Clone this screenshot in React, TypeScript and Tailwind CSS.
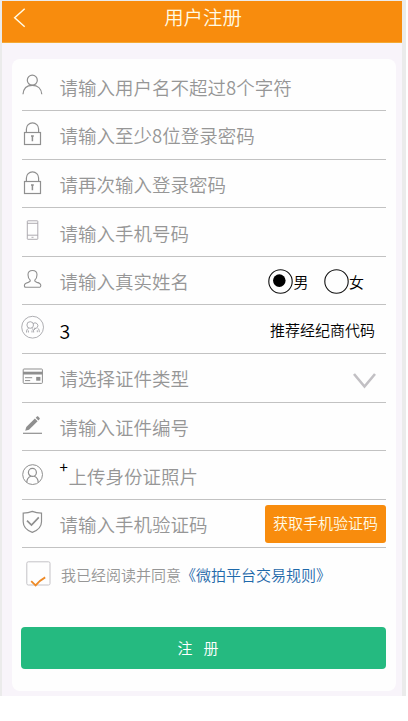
import type { ReactNode } from 'react';

interface FieldRowProps {
  icon: ReactNode;
  children: ReactNode;
}

// Icons are drawn in a box as tall as the row, 22px wide
function RowIcon({ children, color = '#8f8f8f' }: { children: ReactNode; color?: string }) {
  return (
    <svg
      width="22"
      height="48"
      viewBox="0 0 22 48"
      className="shrink-0 self-start overflow-visible"
      fill="none"
      stroke={color}
      strokeWidth="1.2"
    >
      {children}
    </svg>
  );
}

function FieldRow({ icon, children }: FieldRowProps) {
  return (
    <div className="flex h-[48.6px] items-center border-b border-[#c2c2c2]">
      {icon}
      <div className="flex h-full min-w-0 flex-1 items-center pt-[3px] pl-[15.5px]">{children}</div>
    </div>
  );
}

function Placeholder({ children }: { children: ReactNode }) {
  return <span className="text-[18.5px] font-[350] whitespace-nowrap text-[#969696]">{children}</span>;
}

const UserIcon = () => (
  <RowIcon>
    <circle cx="10.3" cy="18.2" r="5" />
    <path d="M1 32.2C1.4 26.5 5 23.3 10.3 23.3S19.4 26.5 19.8 32.2" />
  </RowIcon>
);

const LockIcon = () => (
  <RowIcon>
    <rect x="2.5" y="21.5" width="16" height="12" />
    <path d="M4.4 21.5V18a6.1 6.1 0 0 1 12.2 0v3.5" />
    <path d="M10.4 24.5v5.8M9 25h2.8" strokeWidth="1.5" />
  </RowIcon>
);

const PhoneIcon = () => (
  <RowIcon color="#a5a2a8">
    <rect x="5.3" y="12.8" width="10.5" height="18.5" rx="0.5" strokeWidth="0.9" />
    <path d="M5.3 15.3h10.5M5.3 27.2h10.5M9.5 29.3h2" strokeWidth="0.9" />
  </RowIcon>
);

const PersonIcon = () => (
  <RowIcon>
    <path
      d="M8.2 23.2C6.5 21.6 6 19.8 6 17.7c0-2.6 1.9-4.2 4.5-4.2s4.5 1.6 4.5 4.2c0 2.1-.5 3.9-2.2 5.5-.3 1.5.8 1.8 2.2 2.2 2.5.6 3.8 1.1 3.8 3.2 0 1.2-.3 1.6-1 1.6H3.6c-.8 0-1.2-.4-1.2-1.6 0-2.1 1.5-2.6 3.9-3.2 1.3-.4 2.3-.7 1.9-2.2Z"
      strokeWidth="1.1"
    />
  </RowIcon>
);

const GroupIcon = () => (
  <RowIcon color="#9b9ba0">
    <circle cx="10.6" cy="22.2" r="10.9" strokeWidth="0.8" />
    <g strokeWidth="0.85">
      <circle cx="8.2" cy="20" r="3.3" />
      <path d="M11.2 18.6a2.8 2.8 0 1 1 .7 4.6" />
      <path d="M4.5 27.5c0-2.2.7-3.6 2.2-4.3M9.7 23.2c1.4.7 2 2.2 2 4.3M12.2 25c.3-1 .8-1.5 1.5-1.8M15.6 23.1c1.2.7 1.7 2 1.7 4.1M6.4 25.5v2M10 25.5v2M15.3 25.3v1.9" />
    </g>
  </RowIcon>
);

const CardIcon = () => (
  <RowIcon>
    <rect x="1.2" y="15" width="19.2" height="14.4" rx="0.8" strokeWidth="1" />
    <path d="M1 19.1h19.6" strokeWidth="2.8" />
    <path d="M3 23.7h7.2M3 26.6h5.2" strokeWidth="1" />
    <rect x="14.2" y="22.9" width="4.2" height="3.8" fill="#8f8f8f" stroke="none" />
  </RowIcon>
);

const PencilIcon = () => (
  <RowIcon>
    <path d="M1 30.3h19" strokeWidth="1.2" />
    <path d="m3.2 27.8 1.1-3.9 8.6-8.3 2.7 2.7-8.6 8.4Z" fill="#8f8f8f" stroke="none" />
    <path d="m13.7 14.7 1.2-1.1c.5-.5 1-.4 1.5.1l1 1c.5.5.6 1 .1 1.5l-1.1 1.2Z" fill="#8f8f8f" stroke="none" />
  </RowIcon>
);

const AvatarIcon = () => (
  <RowIcon>
    <circle cx="10.6" cy="23.6" r="9.9" strokeWidth="1" />
    <circle cx="10.4" cy="21.4" r="4" strokeWidth="1.2" />
    <path d="M4.8 31.2c.1-2.9 1.5-4.9 4-5.9M12.2 25.3c2.5 1 3.9 3 4 5.9" strokeWidth="1.2" />
  </RowIcon>
);

const ShieldIcon = () => (
  <RowIcon>
    <path
      d="M10.3 11.4c2.6 1.1 5.6 1.7 9.2 1.7v8.6c0 5-4 8.7-9.2 10.7-5.2-2-9.1-5.7-9.1-10.7v-8.6c3.6 0 6.6-.6 9.1-1.7Z"
      strokeWidth="1.2"
    />
    <path d="m5 20.6 4.5 4.4 7.3-7.6" strokeWidth="1.7" />
  </RowIcon>
);

function Radio({ label, checked = false }: { label: string; checked?: boolean }) {
  return (
    <label className="flex items-center">
      <svg width="25" height="25" viewBox="0 0 25 25" fill="none">
        <circle cx="12.5" cy="12.5" r="11.7" stroke="#111" strokeWidth="1.1" />
        {checked && <circle cx="11.3" cy="11.6" r="6.3" fill="#000" />}
      </svg>
      <span className="text-[15px] leading-6 font-[350] text-black">{label}</span>
    </label>
  );
}

export default function App() {
  return (
    <div className="h-[721px] w-[408px] bg-white font-['Noto_Sans_CJK_SC',sans-serif]">
      <div className="h-[696px] w-[406px] bg-[#ebebeb] pt-px pr-1 pl-0.5">
        <div className="h-full bg-[#f8f4fa]">
          <header className="relative flex h-[41.5px] justify-center border-b border-[#f4aa35] bg-[#f88c0d]">
            <svg
              className="absolute top-[7px] left-[11px]"
              width="13"
              height="20"
              viewBox="0 0 13 20"
              fill="none"
              stroke="#fffbe6"
              strokeWidth="1.5"
            >
              <path d="M11.7 .8 1.7 9.8l10 9" />
            </svg>
            <h1 className="pl-0.5 text-[19.4px] leading-[32px] font-[350] text-[#fffbe6]">用户注册</h1>
          </header>

          <main className="mt-[16.5px] mr-[6px] ml-[10px] h-[632px] rounded-lg bg-[#fefefe] pt-[3.4px] pr-[10px] pl-[10px]">
            <FieldRow icon={<UserIcon />}>
              <Placeholder>请输入用户名不超过8个字符</Placeholder>
            </FieldRow>
            <FieldRow icon={<LockIcon />}>
              <Placeholder>请输入至少8位登录密码</Placeholder>
            </FieldRow>
            <FieldRow icon={<LockIcon />}>
              <Placeholder>请再次输入登录密码</Placeholder>
            </FieldRow>
            <FieldRow icon={<PhoneIcon />}>
              <Placeholder>请输入手机号码</Placeholder>
            </FieldRow>
            <FieldRow icon={<PersonIcon />}>
              <Placeholder>请输入真实姓名</Placeholder>
              <div className="ml-auto flex gap-[15.5px] pr-[22px] pb-px">
                <Radio label="男" checked />
                <Radio label="女" />
              </div>
            </FieldRow>
            <FieldRow icon={<GroupIcon />}>
              <span className="pb-px text-[19.5px] font-[350] text-black">3</span>
              <span className="ml-auto pr-[11px] pb-px text-[15px] font-[350] text-black">推荐经纪商代码</span>
            </FieldRow>
            <FieldRow icon={<CardIcon />}>
              <Placeholder>请选择证件类型</Placeholder>
              <svg
                className="mt-[3px] mr-[10px] ml-auto"
                width="23"
                height="16"
                viewBox="0 0 23 16"
                fill="none"
                stroke="#c2c0c4"
                strokeWidth="2.6"
              >
                <path d="m1 1 10.5 12.5L22 1" />
              </svg>
            </FieldRow>
            <FieldRow icon={<PencilIcon />}>
              <Placeholder>请输入证件编号</Placeholder>
            </FieldRow>
            <FieldRow icon={<AvatarIcon />}>
              <span className="mb-[18px] w-[9px] text-[15px] leading-4 text-black">+</span>
              <Placeholder>上传身份证照片</Placeholder>
            </FieldRow>
            <FieldRow icon={<ShieldIcon />}>
              <Placeholder>请输入手机验证码</Placeholder>
              <button className="mb-[3px] ml-auto h-[38px] w-[121px] rounded-[3px] bg-[#f88c0d] text-[15px] font-[350] whitespace-nowrap text-[#fffbe6]">
                获取手机验证码
              </button>
            </FieldRow>

            <div className="mt-[13px] flex h-6 items-center pl-[4px]">
              <svg width="25" height="25" viewBox="0 0 25 25" fill="none" className="shrink-0 overflow-visible">
                <rect x="0.8" y="0.8" width="23.2" height="23.2" rx="1.5" stroke="#c4c2c6" />
                <path d="m5.2 20.2 4.4 4.2q3.6-4.7 9.6-8" stroke="#ee8a26" strokeWidth="1.8" />
              </svg>
              <p className="pt-[3px] pl-[10px] text-[15px] font-[350] whitespace-nowrap text-[#969696]">
                我已经阅读并同意<span className="text-[#1e69aa]">《微拍平台交易规则》</span>
              </p>
            </div>

            <button className="mt-[41.6px] -ml-px block h-[42px] w-[365px] rounded-[4px] bg-[#25ba80] pr-[11px] text-[15px] font-[350] text-white">
              <span className="mr-[11px]">注</span>
              <span>册</span>
            </button>
          </main>
        </div>
      </div>
    </div>
  );
}
